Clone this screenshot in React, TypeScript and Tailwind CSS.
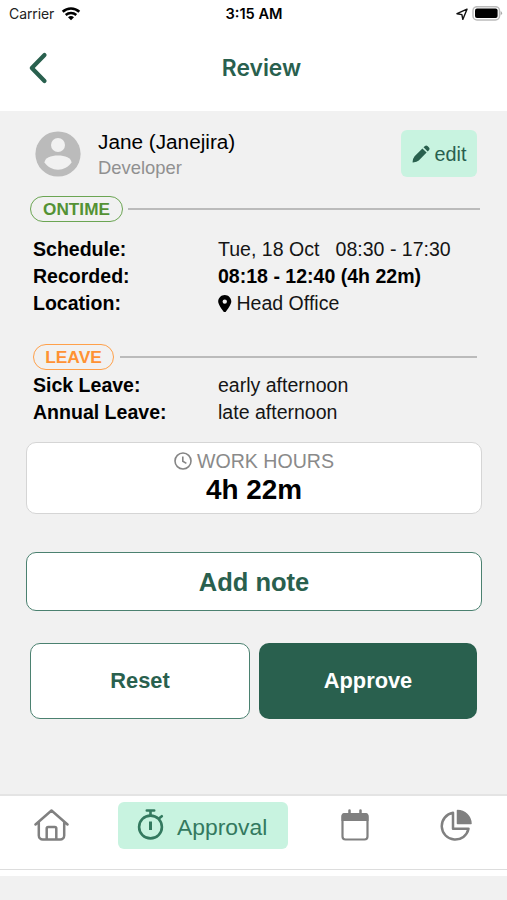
import React from "react";
import { FaLocationDot } from "react-icons/fa6";

function StatusBar() {
  return (
    <div className="flex h-7 items-center justify-between pl-[9px] pr-[8px] font-['Inter'] text-black">
      <div className="flex w-[140px] items-center gap-[7px]">
        <span className="text-[14px] leading-4 tracking-[-0.1px] text-[#222]">Carrier</span>
        <svg width="20" height="16" viewBox="0 0 20 16" fill="none" stroke="#000">
          <path d="M1.7 5.8a12.2 12.2 0 0 1 16.6 0" strokeWidth="2.6" />
          <path d="M4.7 9a8 8 0 0 1 10.6 0" strokeWidth="2.4" />
          <path d="M7 11.2a4.8 4.8 0 0 1 6 0L10 14.3z" fill="#000" stroke="none" />
        </svg>
      </div>
      <span className="text-[14.6px] font-semibold leading-4">3:15 AM</span>
      <div className="-mr-1 flex w-[144px] items-center justify-end gap-1">
        <svg width="12" height="12" viewBox="0 0 12 12" fill="none" stroke="#111" strokeWidth="1.4" strokeLinejoin="round">
          <path d="M11 1.2 1 5.7l4.9.9.9 4.8z" />
        </svg>
        <svg width="31" height="16" viewBox="0 0 31 16">
          <rect x="1" y="0.7" width="26.5" height="13.2" rx="4" fill="#fff" stroke="#bbb" strokeWidth="1.5" />
          <rect x="3" y="2.5" width="22.6" height="9.6" rx="2" fill="#000" />
          <path d="M28.6 5q3 2.2 0 4.4z" fill="#aaa" />
        </svg>
      </div>
    </div>
  );
}

function InfoRow({ label, children, bold = false }: { label: string; children: React.ReactNode; bold?: boolean }) {
  return (
    <div className="flex h-[27px] items-center whitespace-pre">
      <span className="w-[185px] text-[19.55px] font-bold">{label}</span>
      <span className={bold ? "text-[19.55px] font-bold" : "flex items-center text-[19.55px] text-[#151515]"}>{children}</span>
    </div>
  );
}

export default function App() {
  return (
    <div className="flex h-[900px] w-[507px] flex-col overflow-hidden bg-[#f1f1f1] font-['Liberation_Sans',Arial,sans-serif] text-black">
      <header className="h-[111px] shrink-0 bg-white">
        <StatusBar />
        <div className="flex h-20 items-center justify-between px-7">
          <svg width="20" height="32" viewBox="0 0 20 32" fill="none" stroke="#29604e" strokeWidth="4.2" strokeLinecap="round" strokeLinejoin="round">
            <path d="M16.5 3 3.8 16l12.7 13" />
          </svg>
          <h1 className="pl-4 font-['Inter'] text-[22.8px] font-semibold text-[#29604e]">Review</h1>
          <span className="w-5" />
        </div>
      </header>

      <main className="flex h-[683px] shrink-0 flex-col">
        <section className="mt-[19px] flex h-[47px] items-center pl-[35px] pr-[30px]">
          <svg width="46" height="46" viewBox="0 0 46 46">
            <circle cx="23" cy="23" r="22.6" fill="#bbb" />
            <circle cx="23" cy="14" r="7" fill="#f1f1f1" />
            <path d="M9.5 31.5C9.5 27 16 24.5 23 24.5s13.5 2.5 13.5 7c-3 4.500-8 7.200-13.500 7.200S12.500 36 9.500 31.500z" fill="#f1f1f1" />
          </svg>
          <div className="flex flex-1 flex-col pl-[17px] pt-px">
            <span className="text-[20.75px] leading-[26px]">Jane (Janejira)</span>
            <span className="pt-px text-[18.4px] leading-6 text-[#909090]">Developer</span>
          </div>
          <button className="flex h-[47px] w-[76px] items-center justify-center gap-[5px] rounded-md bg-[#c8f3e0] text-[19.8px] text-[#29604e]">
            <svg width="18" height="18" viewBox="0 0 18 18" fill="#29604e">
              <path d="M10.4 3.400 14.600 7.600 6.800 15.400Q5 16.900 1 17.400.5 17.400.6 16.900 1 13 2.600 11.200z" />
              <path d="M11.5 2.300 13 .9Q14.200-.1 15.500 1l1.500 1.500q1.100 1.300.1 2.500L15.700 6.500z" />
            </svg>
            <span className="pt-0.5">edit</span>
          </button>
        </section>

        <div className="mt-[19px] flex h-[26px] items-center pl-[30px] pr-[27px]">
          <span className="flex h-[26px] w-[93px] items-center justify-center rounded-full border-[1.5px] border-[#6ba553] pt-px text-[17.2px] font-bold text-[#549235]">ONTIME</span>
          <span className="ml-[5px] h-0.5 flex-1 bg-[#bbb]" />
        </div>
        <div className="mt-[14px] pl-[33px]">
          <InfoRow label="Schedule:">Tue, 18 Oct   08:30 - 17:30</InfoRow>
          <InfoRow label="Recorded:" bold>08:18 - 12:40 (4h 22m)</InfoRow>
          <InfoRow label="Location:">
            <FaLocationDot size={17.5} className="-ml-0.5 mr-[3px] text-black" />
            Head Office
          </InfoRow>
        </div>

        <div className="mt-[27px] flex h-[26px] items-center pl-[33px] pr-[30px]">
          <span className="flex h-[26px] w-[81px] items-center justify-center rounded-full border-[1.5px] border-[#ffa04a] pt-px text-[17.4px] font-bold text-[#ff9233]">LEAVE</span>
          <span className="ml-1.5 h-0.5 flex-1 bg-[#bbb]" />
        </div>
        <div className="mt-0.5 pl-[33px]">
          <InfoRow label="Sick Leave:">early afternoon</InfoRow>
          <InfoRow label="Annual Leave:">late afternoon</InfoRow>
        </div>

        <section className="ml-[26px] mr-[25px] mt-4 flex h-[72px] flex-col items-center rounded-[10px] border-[1.5px] border-[#d5d5d5] bg-white pt-1">
          <div className="flex h-[27px] items-center gap-[5px] text-[19.6px] text-[#8a8a8a]">
            <svg width="18" height="18" viewBox="0 0 18 18" fill="none" stroke="#858585" strokeWidth="1.6">
              <circle cx="9" cy="9" r="8" />
              <path d="M8.8 4.500v4.800l3.600 2.100" />
            </svg>
            <span className="pt-0.5">WORK HOURS</span>
          </div>
          <strong className="pt-px text-[27.9px] leading-[30px]">4h 22m</strong>
        </section>

        <button className="ml-[26px] mr-[25px] mt-[38px] h-[59px] shrink-0 rounded-[10px] border-[1.5px] border-[#4b8170] bg-white pt-0.5 text-[25.5px] font-bold text-[#29604e]">Add note</button>

        <div className="mx-[30px] mt-8 flex gap-[9px] text-[21.8px] font-bold">
          <button className="h-[76px] flex-1 rounded-[10px] border-[1.5px] border-[#4b8170] bg-white text-[#29604e]">Reset</button>
          <button className="h-[76px] flex-1 rounded-[10px] bg-[#29604e] text-white">Approve</button>
        </div>
      </main>

      <nav className="flex h-[75px] shrink-0 items-start border-t-2 border-[#e4e4e4] bg-white pl-[34px] pr-[35px] pt-1.5">
        <svg className="mt-[7px]" width="35" height="32" viewBox="0 0 35 32" fill="none" stroke="#808080" strokeWidth="2.5" strokeLinecap="round" strokeLinejoin="round">
          <path d="M1.5 15.500 17.500 1.500l16 14M4.800 13.500v13a4 4 0 0 0 4 4h17.400a4 4 0 0 0 4-4v-13M12.700 30.500V19.500a1.500 1.500 0 0 1 1.500-1.500h6.600a1.500 1.500 0 0 1 1.500 1.500v11" />
        </svg>
        <div className="ml-[49px] flex h-[47px] w-[170px] items-center rounded-md bg-[#c8f3e0] pl-[19px] text-[#33795f]">
          <svg className="mb-1" width="27" height="32" viewBox="0 0 27 32" fill="none" stroke="#33795f" strokeWidth="2.6" strokeLinecap="round">
            <circle cx="13.5" cy="19" r="11.4" />
            <path d="M9.8 2.500h7.400M13.500 2.500v5M22.500 10l2.300-1.800" />
            <path d="M13.5 13.500v8.500" strokeWidth="3" strokeLinecap="butt" />
          </svg>
          <span className="ml-[13px] pt-[3px] text-[22.9px]">Approval</span>
        </div>
        <svg className="ml-[53px] mt-[7px]" width="28" height="32" viewBox="0 0 28 32">
          <rect x="1.5" y="5" width="25" height="25.5" rx="3" fill="#fff" stroke="#808080" strokeWidth="2.2" />
          <path d="M.5 12V7a3 3 0 0 1 3-3h21a3 3 0 0 1 3 3v5z" fill="#808080" />
          <path d="M8.5 5V1.500M19.500 5V1.500" stroke="#808080" strokeWidth="2.5" strokeLinecap="round" />
        </svg>
        <svg className="ml-auto mt-[7px]" width="32" height="32" viewBox="0 0 32 32">
          <path d="M17.5 1.500a13.500 13.500 0 0 1 13.500 13H17.500z" fill="#808080" stroke="#808080" strokeWidth="1.5" strokeLinejoin="round" />
          <path d="M13 3.800v16h15.500A13.500 13.500 0 1 1 13 3.800z" fill="none" stroke="#808080" strokeWidth="2.5" strokeLinejoin="round" />
        </svg>
      </nav>
      <div className="h-[7px] shrink-0 border-t border-[#ddd] bg-white" />
    </div>
  );
}
